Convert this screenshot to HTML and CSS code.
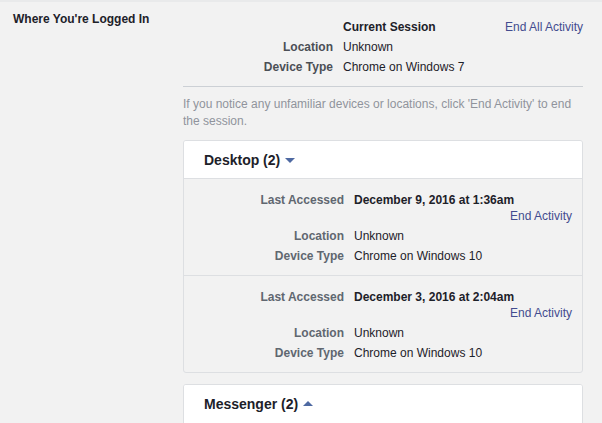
FILE: index.html
```html
<!DOCTYPE html>
<html>
<head>
<meta charset="utf-8">
<link rel="stylesheet" href="styles.css">
</head>
<body>
<div class="section">
  <div class="section-title">Where You're Logged In</div>
  <div class="section-body">
    <div class="current">
      <div class="c-label"></div>
      <div class="c-value strong">Current Session</div>
      <a class="link c-link">End All Activity</a>
      <div class="c-label">Location</div>
      <div class="c-value">Unknown</div>
      <div></div>
      <div class="c-label">Device Type</div>
      <div class="c-value">Chrome on Windows 7</div>
      <div></div>
    </div>
    <div class="divider"></div>
    <p class="note">If you notice any unfamiliar devices or locations, click 'End Activity' to end the session.</p>

    <div class="card">
      <div class="card-head">Desktop (2) <span class="arrow down"></span></div>
      <div class="entry">
        <div class="row">
          <div class="label">Last Accessed</div>
          <div class="value"><div class="strong">December 9, 2016 at 1:36am</div><div class="end"><a class="link">End Activity</a></div></div>
        </div>
        <div class="row">
          <div class="label">Location</div>
          <div class="value">Unknown</div>
        </div>
        <div class="row">
          <div class="label">Device Type</div>
          <div class="value">Chrome on Windows 10</div>
        </div>
      </div>
      <div class="entry">
        <div class="row">
          <div class="label">Last Accessed</div>
          <div class="value"><div class="strong">December 3, 2016 at 2:04am</div><div class="end"><a class="link">End Activity</a></div></div>
        </div>
        <div class="row">
          <div class="label">Location</div>
          <div class="value">Unknown</div>
        </div>
        <div class="row">
          <div class="label">Device Type</div>
          <div class="value">Chrome on Windows 10</div>
        </div>
      </div>
    </div>

    <div class="card card-collapsed">
      <div class="card-head">Messenger (2) <span class="arrow up"></span></div>
    </div>
  </div>
</div>
</body>
</html>
```

FILE: styles.css
```css
html, body {
  margin: 0;
  padding: 0;
  background: #f2f2f2;
}
body {
  font-family: "Liberation Sans", Arial, sans-serif;
  font-size: 12px;
  color: #1d2129;
  border-top: 2px solid #e9eaeb;
  overflow: hidden;
  height: 421px;
}
.section {
  display: flex;
  padding: 9px 19px 0 13px;
}
.section-title {
  width: 170px;
  flex: none;
  font-weight: bold;
  line-height: 16px;
  padding-top: 0;
}
.section-body {
  width: 400px;
  padding-top: 6px;
}
.current {
  display: grid;
  grid-template-columns: 150px 1fr auto;
  column-gap: 10px;
  line-height: 20px;
}
.c-label {
  text-align: right;
  font-weight: bold;
  color: #4b4f56;
}
.c-value { color: #1d2129; }
.strong { font-weight: bold; }
.link {
  color: #434c8f;
  text-decoration: none;
}
.divider {
  border-top: 1px solid #ccd0d5;
  margin-top: 9px;
}
.note {
  margin: 9px 0 10px;
  color: #90949c;
  line-height: 17px;
}
.card {
  background: #f2f2f2;
  border: 1px solid #dddfe2;
  border-radius: 3px;
  margin-bottom: 11px;
  overflow: hidden;
}
.card-collapsed {
  height: 60px;
  background: #fff;
}
.card-head {
  background: #fff;
  height: 37px;
  display: flex;
  align-items: center;
  padding-left: 20px;
  font-size: 14px;
  font-weight: bold;
  color: #1d2129;
}
.arrow {
  width: 0;
  height: 0;
  margin-left: 5px;
  border-left: 5px solid transparent;
  border-right: 5px solid transparent;
}
.arrow.down {
  border-top: 5px solid #4e69a2;
  margin-top: 2px;
}
.arrow.up {
  border-bottom: 5px solid #4e69a2;
  margin-top: -1px;
}
.entry {
  border-top: 1px solid #dddfe2;
  padding: 13px 10px 11px 0;
  display: flex;
  flex-direction: column;
  gap: 4px;
  line-height: 16px;
}
.row {
  display: flex;
  gap: 10px;
}
.label {
  width: 160px;
  flex: none;
  text-align: right;
  font-weight: bold;
  color: #606770;
}
.value {
  flex: 1;
  color: #1d2129;
}
.end { text-align: right; }
```
